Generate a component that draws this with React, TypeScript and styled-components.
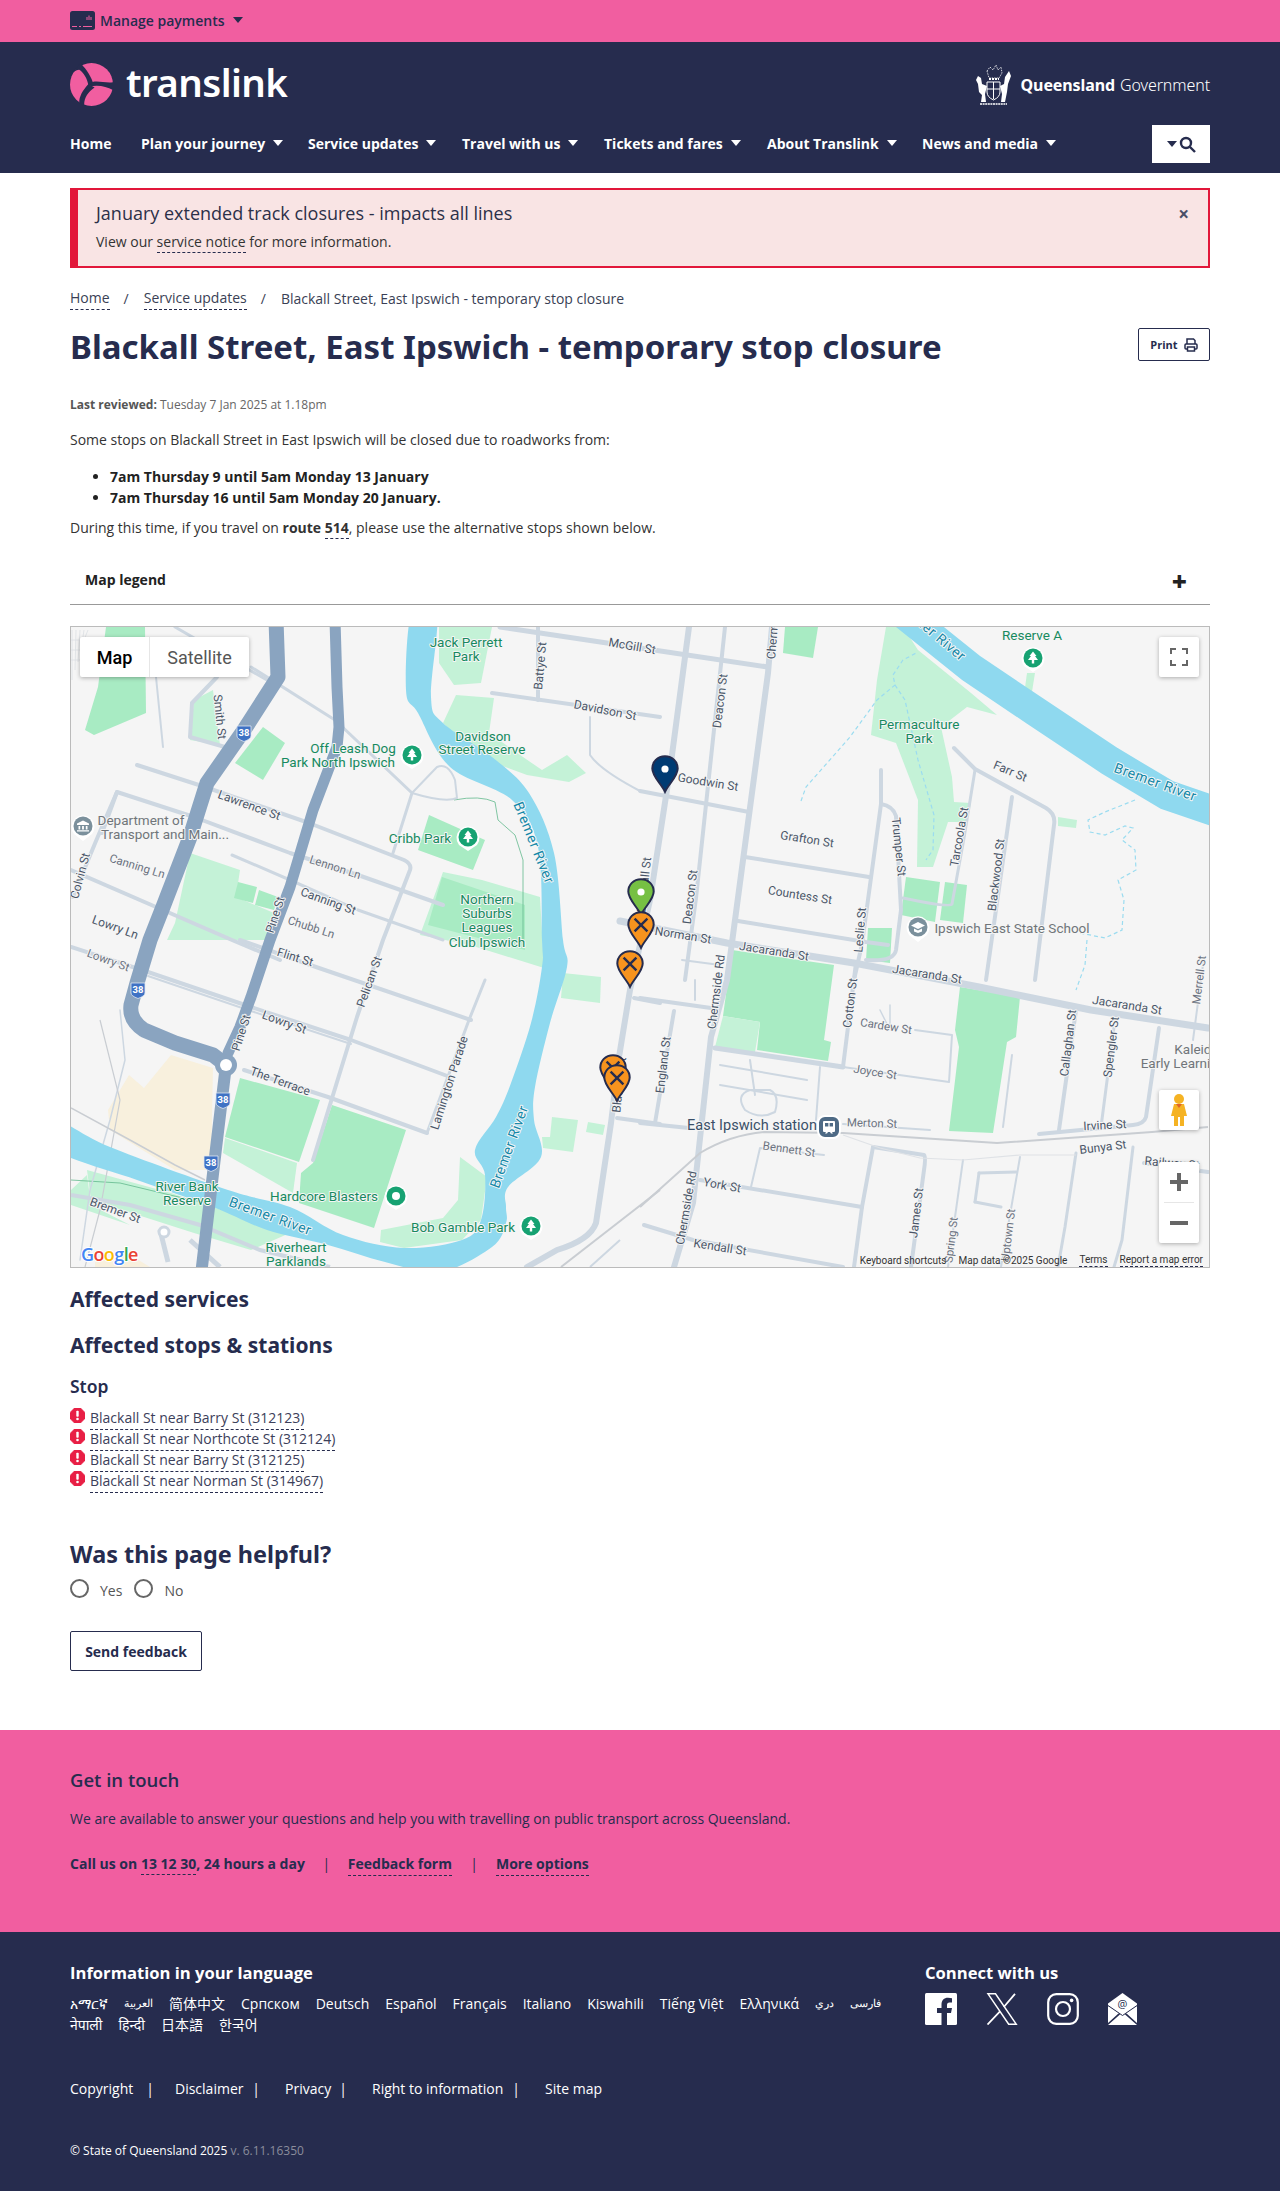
import React from "react";
import styled, { createGlobalStyle } from "styled-components";

const NAVY = "#262c4e";
const PINK = "#f15ea0";
const BODY = `"Open Sans", "Noto Sans", "Noto Sans CJK SC", sans-serif`;
const HEAD = `"Noto Sans", "Open Sans", sans-serif`;
const MAPF = `Roboto, "Liberation Sans", sans-serif`;

const Global = createGlobalStyle`
  html, body { margin: 0; padding: 0; background: #fff; }
  body { font-family: ${BODY}; font-size: 14px; color: #333; }
  * { box-sizing: border-box; }
  a { color: inherit; text-decoration: none; }
`;

const Container = styled.div`width: 1140px; margin: 0 auto;`;
const TopBar = styled.div`height: 42px; background: ${PINK};`;
const PayButton = styled.a`display: inline-flex; align-items: center; height: 40px; gap: 5px; color: ${NAVY}; font-weight: 600; font-size: 14px;`;
const Caret = styled.span<{ $c?: string; $ml?: number }>`
  display: inline-block; width: 0; height: 0; border-left: 5px solid transparent; border-right: 5px solid transparent;
  border-top: 6px solid ${p => p.$c || "#fff"}; margin-left: ${p => p.$ml ?? 8}px;
`;
const Masthead = styled.header`height: 131px; background: ${NAVY};`;
const BrandRow = styled.div`height: 83px; display: flex; align-items: center; justify-content: space-between;`;
const Logo = styled.a`display: flex; align-items: center; gap: 13px; margin-top: 1px;`;
const LogoWord = styled.span`color: #fff; font-family: "Noto Sans", sans-serif; font-weight: 600; font-size: 38.5px; line-height: 42px; letter-spacing: -0.6px; margin-top: -5px;`;
const GovLogo = styled.a`display: flex; align-items: center; gap: 9px; color: #fff; font-family: "Noto Sans", sans-serif; font-size: 16px; letter-spacing: -0.1px; margin-top: 2px;`;
const GovBold = styled.b`font-weight: 700;`;
const GovLight = styled.span`font-weight: 300; margin-left: 5px;`;
const NavRow = styled.nav`display: flex; align-items: center; height: 38px; position: relative;`;
const NavItem = styled.a<{ $w: number }>`display: inline-flex; align-items: center; width: ${p => p.$w}px; flex: none; color: #fff; font-weight: 700; font-size: 14px; white-space: nowrap; padding-bottom: 2px;`;
const SearchBtn = styled.button`margin-left: auto; width: 58px; height: 38px; background: #fff; border: 0; display: flex; align-items: center; justify-content: center; gap: 2px; padding: 0;`;

const Alert = styled.section`
  margin-top: 15px; height: 80px; background: #f9e4e4; border: 2px solid #e2173a; border-left-width: 8px;
  padding: 11px 18px; position: relative; color: #333;
`;
const AlertTitle = styled.div`font-size: 18px; line-height: 24px; color: #2c3048;`;
const AlertText = styled.div`font-size: 14px; line-height: 20px; margin-top: 7px;`;
const Dashed = styled.a<{ $c?: string }>`border-bottom: 1px dashed ${p => p.$c || NAVY}; padding-bottom: 1px;`;
const Close = styled.span`position: absolute; right: 19px; top: 14px; color: #4a4f68; font-weight: 700; font-size: 19px; line-height: 20px;`;

const Breadcrumb = styled.div`margin-top: 21px; height: 20px; display: flex; align-items: center; font-size: 14px; line-height: 20px; color: #3a3f55;`;
const Slash = styled.span`margin: 0 15px 0 14px;`;
const TitleRow = styled.div`display: flex; justify-content: space-between; align-items: flex-start; height: 44px; margin-top: 16px;`;
const H1 = styled.h1`margin: 0; font-family: ${HEAD}; font-weight: 700; font-size: 33px; line-height: 44px; color: ${NAVY};`;
const PrintBtn = styled.a`width: 72px; height: 33px; margin-top: 3px; border: 1px solid ${NAVY}; border-radius: 2px; display: flex; align-items: center; justify-content: center; gap: 6px; font-size: 11px; font-weight: 700; color: ${NAVY};`;
const Meta = styled.div`margin-top: 28px; font-size: 12px; line-height: 16px; color: #666;`;
const MetaB = styled.b`color: #555; font-weight: 700;`;
const Para = styled.p<{ $mt: number }>`margin: ${p => p.$mt}px 0 0; font-size: 14px; line-height: 20px; color: #333;`;
const Bullets = styled.ul`margin: 16px 0 0; padding: 0 0 0 40px; font-weight: 700; font-size: 14px; line-height: 21px; color: #222;`;
const Legend = styled.div`margin-top: 16px; height: 51px; padding: 0 15px; border-bottom: 1px solid #999; display: flex; align-items: center; justify-content: space-between; font-size: 14px; font-weight: 700; color: #222;`;
const Plus = styled.span`font-size: 26px; font-weight: 800; color: #222; margin-right: 8px; margin-top: 4px; line-height: 26px;`;

const MapFrame = styled.div`margin-top: 21px; width: 1140px; height: 642px; border: 1px solid #bbb; position: relative; overflow: hidden; background: #f5f5f5;`;
const MapSvg = styled.svg`display: block;`;
const Label = styled.text<{ $k: string }>`
  font-family: ${MAPF}; paint-order: stroke; stroke: #f5f5f5; stroke-width: 2px; stroke-linejoin: round;
  font-size: ${p => (p.$k === "st" ? 14.5 : p.$k === "sm" ? 11.5 : p.$k === "rv" ? 14 : p.$k === "pk" || p.$k === "poi" ? 13.5 : 12)}px;
  letter-spacing: ${p => (p.$k === "rv" ? 0.6 : 0)}px;
  fill: ${p => ({ rd: "#4a5568", sm: "#6b7280", pk: "#178a5f", poi: "#70757a", rv: "#1288a8", st: "#3a5068" } as Record<string, string>)[p.$k]};
`;
const Shield = styled.text`font-family: ${MAPF}; font-size: 9.5px; font-weight: 700; fill: #fff;`;
const GoogleMark = styled.text`font-family: "Open Sans", sans-serif; font-size: 18px; font-weight: 600; letter-spacing: -0.6px; paint-order: stroke; stroke: #fff; stroke-width: 2px;`;
const MapType = styled.div`position: absolute; left: 9px; top: 10px; height: 40px; display: flex; background: #fff; border-radius: 2px; box-shadow: 0 1px 4px rgba(0,0,0,.3); font-family: ${MAPF}; font-size: 18px;`;
const MapTab = styled.div<{ $on?: boolean; $w: number }>`width: ${p => p.$w}px; display: flex; align-items: center; justify-content: center; color: ${p => (p.$on ? "#000" : "#565656")}; font-weight: ${p => (p.$on ? 500 : 400)}; border-right: ${p => (p.$on ? "1px solid #e6e6e6" : "0")};`;
const Ctl = styled.div<{ $top: number; $h: number }>`position: absolute; right: 10px; top: ${p => p.$top}px; width: 40px; height: ${p => p.$h}px; background: #fff; border-radius: 2px; box-shadow: 0 1px 4px rgba(0,0,0,.3); display: flex; flex-direction: column; align-items: center; justify-content: center;`;
const ZoomDiv = styled.div`width: 30px; height: 1px; background: #e6e6e6; margin: 0;`;
const ZoomBtn = styled.div`height: 40px; display: flex; align-items: center; justify-content: center;`;
const MapFoot = styled.div`position: absolute; right: 6px; bottom: 0; height: 14px; display: flex; gap: 12px; align-items: center; font-family: ${MAPF}; font-size: 10px; color: #333; white-space: nowrap;`;
const FootLink = styled.span`border-bottom: 1px dashed ${NAVY}; line-height: 13px;`;
const FootTip = styled.span`margin-right: 0;`;

const H2 = styled.h2<{ $mt: number }>`margin: ${p => p.$mt}px 0 0; font-family: ${HEAD}; font-weight: 700; font-size: 21px; line-height: 30px; color: ${NAVY};`;
const H3 = styled.h3`margin: 14px 0 0; font-family: ${HEAD}; font-weight: 600; font-size: 17.5px; line-height: 24px; color: ${NAVY};`;
const StopList = styled.div`margin-top: 10px;`;
const StopRow = styled.div`display: flex; align-items: flex-start; height: 21px; line-height: 20px; font-size: 14px; gap: 5px; color: #3c405a;`;
const H2Big = styled.h2`margin: 45px 0 0; font-family: ${HEAD}; font-weight: 700; font-size: 23.4px; line-height: 34px; color: ${NAVY};`;
const RadioRow = styled.div`margin-top: 9px; height: 20px; display: flex; align-items: center; color: #555; font-size: 14px;`;
const Radio = styled.span<{ $ml: number }>`width: 19px; height: 19px; border-radius: 50%; border: 2px solid #666; margin-left: ${p => p.$ml}px; margin-top: -4px; background: #fff; flex: none;`;
const RadioLabel = styled.span`margin-left: 11px;`;
const SendBtn = styled.a`margin: 31px 0 59px; width: 132px; height: 40px; border: 1px solid ${NAVY}; border-radius: 2px; display: flex; align-items: center; justify-content: center; font-weight: 700; font-size: 14px; color: ${NAVY};`;

const Touch = styled.section`height: 202px; background: ${PINK}; padding-top: 37px; color: ${NAVY};`;
const TouchTitle = styled.div`font-size: 18.5px; line-height: 26px; font-weight: 600;`;
const TouchText = styled.div`margin-top: 16px; line-height: 20px; font-size: 14px;`;
const TouchLinks = styled.div`margin-top: 25px; line-height: 20px; font-weight: 700; font-size: 14px; display: flex;`;
const Sep = styled.span<{ $w: number }>`width: ${p => p.$w}px; text-align: center; font-weight: 400;`;

const Foot = styled.footer`height: 259px; background: ${NAVY}; padding-top: 29px; color: #fff;`;
const FootCols = styled.div`display: flex; height: 75px;`;
const LangCol = styled.div`width: 855px;`;
const FootHead = styled.div`font-size: 16.6px; line-height: 24px; font-weight: 700;`;
const Langs = styled.div`margin-top: 8px; width: 842px; display: flex; flex-wrap: wrap; column-gap: 16px; font-size: 14px; line-height: 21px;`;
const LangLink = styled.a<{ $small?: boolean }>`font-size: ${p => (p.$small ? 10.5 : 14)}px;`;
const Social = styled.div`margin-top: 8px; display: flex; align-items: center; gap: 29px;`;
const FootLinks = styled.div`margin-top: 43px; display: flex; font-size: 14px; line-height: 20px;`;
const Copy = styled.div`margin-top: 43px; font-size: 12px; line-height: 18px;`;
const Ver = styled.span`color: #8a8d9c;`;

function spline(pts: number[][]) {
  const n = pts.length;
  let d = `M${pts[0][0]} ${pts[0][1]}`;
  for (let i = 0; i < n; i++) {
    const [p0, p1, p2, p3] = [pts[(i - 1 + n) % n], pts[i], pts[(i + 1) % n], pts[(i + 2) % n]];
    const c1 = [p1[0] + (p2[0] - p0[0]) / 6, p1[1] + (p2[1] - p0[1]) / 6];
    const c2 = [p2[0] - (p3[0] - p1[0]) / 6, p2[1] - (p3[1] - p1[1]) / 6];
    d += `C${c1[0].toFixed(1)} ${c1[1].toFixed(1)} ${c2[0].toFixed(1)} ${c2[1].toFixed(1)} ${p2[0]} ${p2[1]}`;
  }
  return d + "Z";
}
const riverPts = [[412, 610], [406, 690], [418, 713], [450, 767], [512, 800], [538, 847], [542, 940], [542, 967], [531, 1023], [511, 1083], [496, 1117], [475, 1150], [485, 1175], [481, 1220], [462, 1240], [404, 1248], [343, 1235], [290, 1207], [228, 1190], [110, 1147], [55, 1120], [55, 1150], [137, 1180], [213, 1207], [267, 1230], [328, 1245], [385, 1262], [440, 1272], [492, 1247], [506, 1223], [506, 1207], [508, 1187], [541, 1157], [534, 1120], [535, 1087], [550, 1023], [567, 967], [563, 940], [554, 853], [529, 793], [492, 757], [443, 723], [431, 697], [437, 610]];

type L = [string, number, number, number, string];
const labels: L[] = [
  ["Smith St", 219, 717, 84, "rd"], ["Battye St", 541, 666, -85, "rd"], ["McGill St", 632, 647, 10, "rd"],
  ["Jack Perrett", 466, 643, 0, "pk"], ["Park", 466, 657, 0, "pk"], ["Davidson St", 605, 711, 11, "rd"],
  ["Davidson", 483, 737, 0, "pk"], ["Street Reserve", 482, 750, 0, "pk"],
  ["Off Leash Dog", 353, 749, 0, "pk"], ["Park North Ipswich", 338, 763, 0, "pk"],
  ["Lawrence St", 249, 806, 20, "rd"], ["Cribb Park", 420, 839, 0, "pk"], ["Bremer River", 533, 843, 68, "rv"],
  ["Department of", 141, 821, 0, "poi"], ["Transport and Main...", 165, 835, 0, "poi"],
  ["Canning Ln", 137, 867, 17, "sm"], ["Lennon Ln", 335, 868, 18, "sm"], ["Canning St", 328, 902, 20, "rd"],
  ["Colvin St", 81, 876, -75, "rd"], ["Pine St", 276, 915, -72, "rd"], ["Chubb Ln", 311, 928, 18, "sm"],
  ["Lowry Ln", 115, 928, 20, "rd"], ["Northern", 487, 900, 0, "pk"], ["Suburbs", 487, 914, 0, "pk"],
  ["Leagues", 487, 928, 0, "pk"], ["Club Ipswich", 487, 943, 0, "pk"], ["Flint St", 295, 958, 17, "rd"],
  ["Lowry St", 108, 961, 20, "sm"], ["Lowry St", 284, 1023, 20, "rd"], ["Pine St", 242, 1033, -72, "rd"],
  ["Pelican St", 370, 982, -70, "rd"], ["Lamington Parade", 450, 1083, -72, "rd"], ["The Terrace", 280, 1082, 20, "rd"],
  ["Bremer River", 510, 1147, -70, "rv"], ["Bremer River", 270, 1217, 20, "rv"], ["Bremer St", 115, 1211, 20, "rd"],
  ["River Bank", 187, 1187, 0, "pk"], ["Reserve", 187, 1201, 0, "pk"], ["Hardcore Blasters", 324, 1197, 0, "pk"],
  ["Bob Gamble Park", 463, 1228, 0, "pk"], ["Riverheart", 296, 1248, 0, "pk"], ["Parklands", 296, 1262, 0, "pk"],
  ["Blackall St", 620, 1085, -84, "rd"], ["Blackall St", 645, 885, -84, "rd"], ["Deacon St", 721, 701, -83, "rd"],
  ["Deacon St", 691, 897, -83, "rd"], ["Chermside Rd", 775, 622, -85, "rd"], ["Goodwin St", 708, 783, 9, "rd"],
  ["Grafton St", 807, 840, 9, "rd"], ["Countess St", 800, 896, 9, "rd"], ["Norman St", 683, 936, 9, "rd"],
  ["Trumper St", 898, 847, 84, "rd"], ["Tarcoola St", 960, 837, -80, "rd"], ["Blackwood St", 997, 875, -83, "rd"],
  ["Leslie St", 861, 930, -85, "rd"], ["Farr St", 1010, 772, 23, "rd"], ["Bremer River", 1155, 783, 20, "rv"],
  ["Bremer River", 930, 631, 40, "rv"],
  ["Permaculture", 919, 725, 0, "pk"], ["Park", 919, 739, 0, "pk"], ["Reserve A", 1032, 636, 0, "pk"],
  ["Ipswich East State School", 1012, 929, 0, "poi"], ["Jacaranda St", 774, 952, 9, "rd"], ["Jacaranda St", 927, 975, 9, "rd"],
  ["Jacaranda St", 1127, 1006, 9, "rd"], ["Chermside Rd", 717, 992, -83, "rd"], ["Chermside Rd", 687, 1208, -80, "rd"],
  ["Cotton St", 851, 1003, -83, "rd"], ["Cardew St", 886, 1027, 9, "sm"], ["Joyce St", 875, 1073, 9, "sm"],
  ["England St", 664, 1065, -83, "rd"], ["Callaghan St", 1069, 1043, -83, "rd"], ["Spengler St", 1112, 1047, -83, "rd"],
  ["Merrell St", 1200, 980, -83, "sm"], ["Kaleidoscope", 1215, 1050, 0, "poi"], ["Early Learning", 1183, 1064, 0, "poi"],
  ["East Ipswich station", 752, 1126, 0, "st"], ["Merton St", 872, 1124, 2, "sm"], ["Irvine St", 1105, 1126, -3, "rd"],
  ["Bennett St", 789, 1150, 8, "sm"], ["Bunya St", 1103, 1148, -7, "rd"], ["Railway St", 1172, 1164, 5, "rd"],
  ["York St", 722, 1186, 10, "rd"], ["James St", 917, 1213, -83, "rd"], ["Kendall St", 720, 1248, 9, "rd"],
  ["Spring St", 952, 1240, -83, "sm"], ["Uptown St", 1009, 1235, -83, "sm"],
];

type R = [string, number];
const roads: R[] = [
  ["M137 765L205 787L309 823L404 860Q412 864 410 870L383 940L357 1017L313 1160", 4],
  ["M102 833L117 792L194 817L290 853L358 875L443 905", 4],
  ["M117 792Q96 840 73 897", 4],
  ["M71 870L156 907L232 940L280 960", 4], ["M232 855L290 880L358 910L443 940", 3],
  ["M240 940L316 967L471 1020", 4], ["M485 980L469 1020L427 1133", 3],
  ["M71 947L148 972L251 1007L351 1040L450 1077", 4], ["M148 976L251 1011L351 1044", 2],
  ["M244 1070L328 1097L427 1133", 4], ["M251 667L335 720L412 793L393 853", 3], ["M175 627L267 680", 3],
  ["M217 677L192 703L190 737L225 747", 4], ["M156 677L163 747", 2],
  ["M412 793L437 767Q448 762 455 780L457 798Q445 803 412 793", 2],
  ["M500 627L607 643L768 667", 5], ["M538 627L538 700", 4], ["M492 693L660 717", 4],
  ["M590 717L590 755Q600 770 640 791", 2],
  ["M689 627L670 770L650 900L630 990L619 1057L611 1123L596 1223Q590 1240 557 1250L527 1267", 6],
  ["M725 627L696 898L685 980", 4], ["M772 627L768 673L727 980L711 1037L693 1203L674 1267", 6],
  ["M674 1011L655 1123", 4], ["M640 791L749 812", 4], ["M745 857L869 877", 4], ["M738 921L866 942L888 945", 4],
  ["M881 770L881 804L862 944L854 980", 4], ["M881 804Q893 806 896 816L901 910L896 950Q894 962 866 960", 4],
  ["M975 770L964 838L952 904Q950 908 903 898", 3], ["M954 748L975 769L1046 808Q1056 814 1054 825L1035 980", 4],
  ["M1012 797L986 980", 4], ["M620 921L727 943L854 963L979 987L1091 1010L1208 1028", 7],
  ["M1076 1010L1059 1130", 4], ["M1114 1027L1101 1127", 3], ["M1159 1028L1146 1117Q1144 1124 1133 1125L1039 1134", 4],
  ["M1204 957L1193 1040", 2], ["M715 1048L843 1067", 5], ["M843 1067L949 1082L952 1035L915 1030", 2], ["M856 963L843 1067", 4],
  ["M873 1147L924 1155Q926 1157 924 1170L911 1267", 4], ["M873 1147L862 1207L854 1267", 4], ["M700 1180L862 1207", 4],
  ["M644 1225L693 1240L843 1267", 4], ["M751 1187L760 1148L824 1155", 2], ["M843 1124L930 1130", 2],
  ["M1076 1153L1065 1227L1058 1267", 3], ["M1133 1147L1122 1240L1114 1267", 3], ["M1144 1163L1208 1172", 4],
  ["M963 1160L948 1267", 2], ["M1020 1157L1001 1267", 2], ["M979 1173L1016 1172", 3], ["M975 1202L1001 1207", 3], ["M979 1173L975 1202", 3],
  ["M640 998L711 1008", 4], ["M640 1123L689 1128", 4], ["M617 1118L660 1124", 4], ["M634 998L660 1003", 4],
  ["M720 1065L807 1080M720 1085L807 1100", 2], ["M750 1090Q735 1095 745 1110Q760 1120 775 1112Q780 1095 770 1090Z", 2],
  ["M820 1067L816 1120", 2], ["M750 1060L755 1095", 2],
  ["M682 960L720 965M695 1000L695 980", 2], ["M880 1010L890 1030L890 1005", 1.5],
  ["M1012 1055L1003 1127", 2], ["M120 1010L125 1060L110 1120L90 1190L80 1260", 1.5],
];

function Pin({ x, y, fill, cross }: { x: number; y: number; fill: string; cross?: boolean }) {
  return (
    <g transform={`translate(${x - 14} ${y})`}>
      <path d="M14 1.2C6.4 1.2 1.3 7 1.3 13.6 1.3 21.6 10 28.4 14 36.8 18 28.4 26.7 21.6 26.7 13.6 26.7 7 21.6 1.2 14 1.2Z" fill={fill} stroke={NAVY} strokeWidth="2" />
      {cross ? <path d="M7.6 7.6L20.4 20.4M20.4 7.6L7.6 20.4" stroke={NAVY} strokeWidth="2.4" /> : <circle cx="14" cy="14" r="3.6" fill="#fff" />}
    </g>
  );
}
function ParkPin({ x, y, dot }: { x: number; y: number; dot?: boolean }) {
  return (
    <g transform={`translate(${x} ${y})`}>
      <path d="M0 14L-9 8A11.5 11.5 0 1 1 9 8Z" fill="#fff" />
      <circle r="9.5" fill="#17a272" />
      {dot ? <circle r="4" fill="#fff" /> : <path d="M0-6.5L3.5-2H2L5 2H1.2V5.5H-1.2V2H-5L-2-2H-3.5Z" fill="#fff" />}
    </g>
  );
}
function GreyPin({ x, y, kind }: { x: number; y: number; kind: "bank" | "school" | "train" }) {
  return (
    <g transform={`translate(${x} ${y})`}>
      {kind === "train" ? <rect x="-11" y="-11" width="22" height="22" rx="7" fill="#4e6a85" stroke="#fff" strokeWidth="2" /> : <><path d="M0 15L-9 8A11.5 11.5 0 1 1 9 8Z" fill="#fff" /><circle r="9.5" fill="#7b909c" /></>}
      {kind === "bank" && <path d="M0-5.5L6-2.5V-1H-6V-2.5ZM-4.5 0H-2.8V3.5H-4.5ZM-.9 0H.9V3.5H-.9ZM2.8 0H4.5V3.5H2.8ZM-6 4.2H6V5.5H-6Z" fill="#fff" />}
      {kind === "school" && <path d="M0-5L7-1.5 0 2-7-1.5ZM-4 1.5L0 3.5 4 1.5V4.5L0 6-4 4.5Z" fill="#fff" />}
      {kind === "train" && <path d="M-5-6H5Q6-6 6-5V4Q6 5 5 5H-5Q-6 5-6 4V-5Q-6-6-5-6ZM-4-4V-.5H-.6V-4ZM.6-4V-.5H4V-4ZM-4 6.5H-2L-1 5H-3ZM4 6.5H2L1 5H3Z" fill="#fff" fillRule="evenodd" />}
    </g>
  );
}
function Hwy({ x, y }: { x: number; y: number }) {
  return (
    <g transform={`translate(${x} ${y})`}>
      <path d="M-7-7H7V3Q7 6 0 8.5-7 6-7 3Z" fill="#3f72c4" stroke="#dfe7f2" strokeWidth=".8" />
      <Shield x="0" y="3" textAnchor="middle">38</Shield>
    </g>
  );
}

function TheMap() {
  const dark = "#a8ebc3", light = "#c4f2d7", road = "#cdd7e1", river = "#8fd9ef", fwy = "#8aa4c0";
  const polys: [string, string][] = [
    ["439,627 492,627 481,683 454,685 439,663", light],
    ["456,695 494,698 489,733 523,757 542,770 567,755 586,773 569,782 527,775 478,757 443,723", light],
    ["106,627 145,627 146,713 94,735 85,730 98,687", dark], ["194,700 213,690 220,745 190,740", light],
    ["263,727 285,743 263,780 235,763", dark], ["429,815 485,840 473,870 418,850", dark],
    ["443,872 482,880 540,897 544,968 470,945 420,935", light], ["442,877 525,905 525,950 428,925", dark],
    ["175,923 190,853 240,870 236,897 274,913 266,940 167,940", light], ["238,882 257,887 253,903 234,898", dark], ["259,890 278,897 274,910 255,905", dark],
    ["240,1078 320,1100 299,1162 225,1137", dark], ["225,1138 297,1163 293,1193 223,1153", light],
    ["332,1105 406,1130 374,1228 299,1203 301,1173 313,1163", dark],
    ["129,1075 144,1088 171,1055 213,1068 211,1170 175,1170 110,1130 108,1110", "#f8f0dd"],
    ["87,1170 171,1193 290,1233 251,1250 194,1233 91,1200", light],
    ["71,1190 87,1175 91,1205 130,1225 71,1205", light],
    ["460,1157 487,1177 481,1220 462,1240 404,1248 380,1242 381,1230 443,1218 458,1200", light],
    ["563,973 601,977 600,1003 561,998", light], ["552,1117 578,1120 573,1152 543,1148 542,1137 550,1137", light], ["588,1122 605,1125 603,1135 586,1132", light],
    ["785,627 818,627 813,658 783,653", dark],
    ["886,627 903,627 918,650 971,693 997,715 967,707 941,727 952,777 954,802 971,803 967,822 948,822 933,867 917,867 918,800 896,743 871,735 877,680", light],
    ["1027,673 1035,673 1031,698 1024,695", light], ["906,877 940,882 935,922 901,915", dark], ["945,882 967,885 963,923 940,920", dark],
    ["868,928 892,928 890,963 866,960", dark], ["1058,817 1077,820 1076,828 1058,826", light],
    ["732,950 834,965 824,1040 831,1042 828,1061 757,1050 760,1022 723,1016", dark], ["723,1016 760,1022 755,1052 715,1047", light],
    ["960,987 1020,997 1016,1037 1007,1042 993,1133 949,1131 959,1047 955,1030", dark],
    ["95,1262 130,1255 150,1267 95,1267", "#f8f0dd"],
  ];
  return (
    <MapSvg width="1138" height="640" viewBox="71 627 1138 640">
      <rect x="71" y="627" width="1138" height="640" fill="#f5f5f5" />
      {polys.map(([pts, c], i) => <polygon key={i} points={pts} fill={c} />)}
      <g stroke="#dcdfe3" strokeWidth=".8" fill="none">
        <path d="M72 630L72 680M76 630L75 670M80 630L78 662M84 630L81 650M88 630L84 640M71 640L90 640M71 650L86 650M71 660L80 660" />
      </g>
      <g fill="none" stroke="#9bdcf0" strokeWidth="1.2" strokeDasharray="4 3">
        <path d="M801 801L806 787L850 737L877 700L895 685L893 675L903 660L918 652" />
        <path d="M895 685L905 700L918 760L934 815L933 850L926 860" />
        <path d="M1135 800L1105 812L1088 820L1090 832L1105 835L1125 826L1133 828L1122 840L1135 850L1136 870L1118 880L1124 900L1122 930L1105 938L1075 932" />
        <path d="M1087 940L1085 965L1076 990" />
      </g>
      <g fill="none" stroke="#62b98d" strokeWidth=".8">
        <path d="M454 800Q480 795 495 802L498 820L515 835L523 860L523 945" />
        <path d="M71 1180L120 1183L170 1195L280 1220L340 1235" />
      </g>
      <g fill="none" strokeLinecap="round" strokeLinejoin="round" stroke={road}>
        {roads.map(([d, w], i) => <path key={i} d={d} strokeWidth={w} />)}
      </g>
      <g fill="none" stroke="#c9cdd2" strokeWidth="2">
        <path d="M640 1207L700 1153Q730 1135 764 1132L843 1133L997 1143L1152 1132L1208 1127" />
        <path d="M660 1190L561 1267" />
        <path d="M100 1020L120 1100L100 1210L85 1267" strokeWidth="1.2" />
        <path d="M71 1108L130 1140L175 1165L205 1180" strokeWidth="1.5" />
        <path d="M963 1160L920 1158L880 1148L843 1135M963 1160L1020 1155L1076 1155" strokeWidth="1.2" stroke="#dfe2e6" />
      </g>
      <g fill="none" stroke={road}>
        <path d="M71 1195L130 1205L200 1225L260 1250L330 1267" strokeWidth="4" />
        <path d="M160 1230L168 1262M190 1240L220 1267" strokeWidth="5" />
        <path d="M590 1267L620 1240" strokeWidth="2" />
      </g>
      <circle cx="164" cy="1232" r="5" fill="#fff" stroke={road} strokeWidth="3" />
      <path d={spline(riverPts)} fill={river} />
      <path d="M905 615L971 668L1035 711L1110 761L1167 795L1225 815" fill="none" stroke={river} strokeWidth="30" />
      <g fill="none" strokeLinecap="round" strokeLinejoin="round" stroke={fwy}>
        <path strokeWidth="15" d="M276 620L278 677L244 730L207 783L190 837L163 907L150 940L137 983L131 1005Q129 1020 144 1030L175 1043L213 1055L226 1065" />
        <path strokeWidth="11" d="M335 620L337 687L339 727L337 747L313 810L290 887L270 940L251 997L240 1027L228 1053" />
        <path strokeWidth="12" d="M226 1065L223 1090L217 1140L201 1275" />
        <circle cx="226" cy="1065" r="11" fill={fwy} stroke="none" />
      </g>
      <circle cx="226" cy="1065" r="6" fill="#fff" />
      {[[244, 733], [138, 990], [223, 1100], [211, 1163]].map(([x, y], i) => <Hwy key={i} x={x} y={y} />)}
      {labels.map(([t, x, y, r, k], i) => (
        <Label key={i} $k={k} x={x} y={y} textAnchor="middle" dominantBaseline="middle" transform={r ? `rotate(${r} ${x} ${y})` : undefined}>{t}</Label>
      ))}
      <ParkPin x={412} y={755} /><ParkPin x={468} y={837} /><ParkPin x={1033} y={658} /><ParkPin x={531} y={1226} /><ParkPin x={396} y={1196} dot />
      <GreyPin x={83} y={826} kind="bank" /><GreyPin x={918} y={927} kind="school" /><GreyPin x={829} y={1127} kind="train" />
      <Pin x={665} y={755} fill="#003b73" />
      <Pin x={641} y={878} fill="#76c043" />
      <Pin x={641} y={911} fill="#f7931e" cross />
      <Pin x={630} y={950} fill="#f7931e" cross />
      <Pin x={613} y={1054} fill="#f7931e" cross />
      <Pin x={617} y={1064} fill="#f7931e" cross />
      <GoogleMark x="81" y="1261">
        <tspan fill="#4285f4">G</tspan><tspan fill="#ea4335">o</tspan><tspan fill="#fbbc05">o</tspan><tspan fill="#4285f4">g</tspan><tspan fill="#34a853">l</tspan><tspan fill="#ea4335">e</tspan>
      </GoogleMark>
    </MapSvg>
  );
}

function LogoMark() {
  return (
    <svg width="43" height="43" viewBox="0 0 42 42">
      <circle cx="21" cy="21" r="21" fill={PINK} />
      <g fill={NAVY}>
        <path d="M3 9L10 0C17 7 21 14 23 21L18 22C17 15 13 9 9 6.500C7 6.500 5 7.500 3 9Z" />
        <path d="M43 18.500C36 20 28 17 22 18.500L19 23C28 21 36 23 43 27Z" />
        <path d="M18 20.500C12 27 9 33 9 38.500L14 43C13 35 17 29 24 24Z" />
      </g>
    </svg>
  );
}
function Crest() {
  return (
    <svg width="37" height="42" viewBox="0 0 37 42" fill="none" stroke="#fff" strokeWidth="1">
      <path d="M12 18H25V28Q25 33 18.500 36Q12 33 12 28Z" />
      <path d="M18.500 18V35M12 25H25" />
      <path d="M3 12L6 14L7 20L12 22L10 30L11 38L6 38L7 31L4 28L3 20L1 16Z" fill="#fff" stroke="none" />
      <path d="M34 7L36 12L33 20L32 28L30 38L26 38L27 30L25 22L29 20L30 13Z" fill="#fff" stroke="none" />
      <path d="M12 7L15 3L18 6L21 1L23 6L26 3L27 9L24 14H14Z" strokeWidth=".8" strokeDasharray="1.5 1" />
      <path d="M14 15H24" strokeWidth="2" strokeDasharray="2 1" />
      <path d="M5 40H32" strokeWidth="1.5" strokeDasharray="2 .6" />
    </svg>
  );
}
const StopGlyph = styled.svg`flex: none; margin-top: 0;`;
function StopIcon() {
  return (
    <StopGlyph width="15" height="15" viewBox="0 0 15 15">
      <path d="M4.400 0H10.600L15 4.400V10.600L10.600 15H4.400L0 10.600V4.400Z" fill="#e81f45" stroke="#e81f45" strokeLinejoin="round" strokeWidth=".5" />
      <rect x="6.300" y="2.800" width="2.400" height="6" rx=".8" fill="#fff" />
      <circle cx="7.500" cy="11" r="1.300" fill="#fff" />
    </StopGlyph>
  );
}

const navItems: [string, number, boolean][] = [
  ["Home", 71, false], ["Plan your journey", 167, true], ["Service updates", 154, true], ["Travel with us", 142, true],
  ["Tickets and fares", 163, true], ["About Translink", 155, true], ["News and media", 140, true],
];
const langs: [string, boolean][] = [["አማርኛ", false], ["العربية", true], ["简体中文", false], ["Српском", false], ["Deutsch", false], ["Español", false], ["Français", false], ["Italiano", false], ["Kiswahili", false], ["Tiếng Việt", false], ["Ελληνικά", false], ["دري", true], ["فارسی", true], ["नेपाली", false], ["हिन्दी", false], ["日本語", false], ["한국어", false]];
const stops = ["Blackall St near Barry St (312123)", "Blackall St near Northcote St (312124)", "Blackall St near Barry St (312125)", "Blackall St near Norman St (314967)"];
const footLinks: [string, number, boolean][] = [["Copyright", 84, true], ["Disclaimer", 85, true], ["Privacy", 62, true], ["Right to information", 148, true], ["Site map", 80, false]];
const FootItem = styled.a<{ $w: number }>`width: ${p => p.$w}px; flex: none; white-space: nowrap;`;
const FootBar = styled.span<{ $w: number }>`width: ${p => p.$w}px; flex: none;`;
const BarMark = styled.span`float: right;`;

export default function App() {
  return (
    <>
      <Global />
      <TopBar>
        <Container>
          <PayButton href="#">
            <svg width="25" height="19" viewBox="0 0 25 19">
              <rect width="25" height="19" rx="2.500" fill={NAVY} />
              <path d="M2 15.500H7M9 15.500H11M13 15.500H22" stroke={PINK} strokeWidth="1" />
              <path d="M17 9V6M19 9V4.500M21 9V6" stroke={PINK} strokeWidth="1" />
            </svg>
            Manage payments
            <Caret $c={NAVY} $ml={3} />
          </PayButton>
        </Container>
      </TopBar>
      <Masthead>
        <Container>
          <BrandRow>
            <Logo href="#"><LogoMark /><LogoWord>translink</LogoWord></Logo>
            <GovLogo href="#"><Crest /><span><GovBold>Queensland</GovBold><GovLight>Government</GovLight></span></GovLogo>
          </BrandRow>
          <NavRow>
            {navItems.map(([t, w, c]) => <NavItem key={t} $w={w} href="#">{t}{c && <Caret />}</NavItem>)}
            <SearchBtn aria-label="Search">
              <Caret $c={NAVY} $ml={0} />
              <svg width="17" height="17" viewBox="0 0 17 17" fill="none" stroke={NAVY} strokeWidth="2.400"><circle cx="7" cy="7" r="5" /><path d="M11 11L16 16" /></svg>
            </SearchBtn>
          </NavRow>
        </Container>
      </Masthead>
      <Container>
        <Alert>
          <AlertTitle>January extended track closures - impacts all lines</AlertTitle>
          <AlertText>View our <Dashed href="#">service notice</Dashed> for more information.</AlertText>
          <Close>×</Close>
        </Alert>
        <Breadcrumb>
          <Dashed href="#">Home</Dashed><Slash>/</Slash><Dashed href="#">Service updates</Dashed><Slash>/</Slash><span>Blackall Street, East Ipswich - temporary stop closure</span>
        </Breadcrumb>
        <TitleRow>
          <H1>Blackall Street, East Ipswich - temporary stop closure</H1>
          <PrintBtn href="#">Print
            <svg width="14" height="14" viewBox="0 0 14 14" fill="none" stroke={NAVY} strokeWidth="1.500"><path d="M3 6V1H9.500L11 2.500V6" /><rect x="1" y="6" width="12" height="5" rx="1" /><rect x="3.500" y="9" width="7" height="4" fill="#fff" /></svg>
          </PrintBtn>
        </TitleRow>
        <Meta><MetaB>Last reviewed:</MetaB> Tuesday 7 Jan 2025 at 1.18pm</Meta>
        <Para $mt={17}>Some stops on Blackall Street in East Ipswich will be closed due to roadworks from:</Para>
        <Bullets>
          <li>7am Thursday 9 until 5am Monday 13 January</li>
          <li>7am Thursday 16 until 5am Monday 20 January.</li>
        </Bullets>
        <Para $mt={10}>During this time, if you travel on <b>route <Dashed href="#">514</Dashed></b>, please use the alternative stops shown below.</Para>
        <Legend>Map legend<Plus>+</Plus></Legend>
        <MapFrame>
          <TheMap />
          <MapType><MapTab $on $w={70}>Map</MapTab><MapTab $w={99}>Satellite</MapTab></MapType>
          <Ctl $top={10} $h={40}>
            <svg width="18" height="18" viewBox="0 0 18 18" fill="none" stroke="#666" strokeWidth="2"><path d="M1 6V1H6M12 1H17V6M17 12V17H12M6 17H1V12" /></svg>
          </Ctl>
          <Ctl $top={463} $h={40}>
            <svg width="18" height="34" viewBox="0 0 18 34"><circle cx="9" cy="6" r="5" fill="#f5b324" /><path d="M4 11H14L17 23H14V33H10V24H8V33H4V23H1Z" fill="#f5b324" /><path d="M6 11L9 15L12 11" fill="#e0642a" /></svg>
          </Ctl>
          <Ctl $top={535} $h={81}>
            <ZoomBtn><svg width="18" height="18" viewBox="0 0 18 18"><path d="M7 0H11V7H18V11H11V18H7V11H0V7H7Z" fill="#666" /></svg></ZoomBtn>
            <ZoomDiv />
            <ZoomBtn><svg width="18" height="4" viewBox="0 0 18 4"><rect width="18" height="4" fill="#666" /></svg></ZoomBtn>
          </Ctl>
          <MapFoot>
            <FootTip>Keyboard shortcuts</FootTip><FootTip>Map data ©2025 Google</FootTip><FootLink>Terms</FootLink><FootLink>Report a map error</FootLink>
          </MapFoot>
        </MapFrame>
        <H2 $mt={16}>Affected services</H2>
        <H2 $mt={16}>Affected stops &amp; stations</H2>
        <H3>Stop</H3>
        <StopList>
          {stops.map(s => <StopRow key={s}><StopIcon /><Dashed href="#">{s}</Dashed></StopRow>)}
        </StopList>
        <H2Big>Was this page helpful?</H2Big>
        <RadioRow><Radio $ml={0} /><RadioLabel>Yes</RadioLabel><Radio $ml={12} /><RadioLabel>No</RadioLabel></RadioRow>
        <SendBtn href="#">Send feedback</SendBtn>
      </Container>
      <Touch>
        <Container>
          <TouchTitle>Get in touch</TouchTitle>
          <TouchText>We are available to answer your questions and help you with travelling on public transport across Queensland.</TouchText>
          <TouchLinks>
            <span>Call us on <Dashed href="#">13 12 30</Dashed>, 24 hours a day</span>
            <Sep $w={43}>|</Sep><Dashed href="#">Feedback form</Dashed><Sep $w={44}>|</Sep><Dashed href="#">More options</Dashed>
          </TouchLinks>
        </Container>
      </Touch>
      <Foot>
        <Container>
          <FootCols>
            <LangCol>
              <FootHead>Information in your language</FootHead>
              <Langs>{langs.map(([l, s]) => <LangLink key={l} $small={s} href="#">{l}</LangLink>)}</Langs>
            </LangCol>
            <div>
              <FootHead>Connect with us</FootHead>
              <Social>
                <svg width="32" height="32" viewBox="0 0 32 32"><rect width="32" height="32" rx="1.500" fill="#fff" /><path d="M22 32V20H26L27 15H22V12C22 10.500 22.700 9.500 24.500 9.500H27V5.200C26 5 24.500 4.800 23 4.800C19 4.800 16.500 7.300 16.500 11.500V15H12V20H16.500V32Z" fill={NAVY} /></svg>
                <svg width="32" height="32" viewBox="0 0 32 32" fill="none" stroke="#fff"><path d="M2 .800H9.500L30.200 31.200H22.700Z" strokeWidth="1.500" /><path d="M29 .800L17.800 14M14 18.300L1.500 31.500" strokeWidth="1.800" /></svg>
                <svg width="32" height="32" viewBox="0 0 32 32" fill="none" stroke="#fff" strokeWidth="2.200"><rect x="1.200" y="1.200" width="29.600" height="29.600" rx="8" /><circle cx="16" cy="16" r="7" /><circle cx="24.600" cy="7.400" r="1.800" fill="#fff" stroke="none" /></svg>
                <svg width="29" height="32" viewBox="0 0 29 32"><path d="M14.500 0L29 10.500V13L14.500 23 0 13V10.500Z" fill="#fff" /><path d="M0 13L11 20 0 30ZM29 13L18 20 29 30ZM12.500 21L14.500 22.300 16.500 21 29 32H0Z" fill="#fff" /><path d="M0 12.500L14.500 22.500 29 12.500" fill="none" stroke={NAVY} strokeWidth="1" /><text x="14.500" y="15" textAnchor="middle" fontSize="11" fontFamily="Open Sans, sans-serif" fill={NAVY}>@</text></svg>
              </Social>
            </div>
          </FootCols>
          <FootLinks>
            {footLinks.map(([t, w, s], i) => <React.Fragment key={t}><FootItem $w={w} href="#">{t}{s && <BarMark>|</BarMark>}</FootItem>{s && <FootBar $w={i === 0 ? 21 : 25} />}</React.Fragment>)}
          </FootLinks>
          <Copy>© State of Queensland 2025 <Ver>v. 6.11.16350</Ver></Copy>
        </Container>
      </Foot>
    </>
  );
}
